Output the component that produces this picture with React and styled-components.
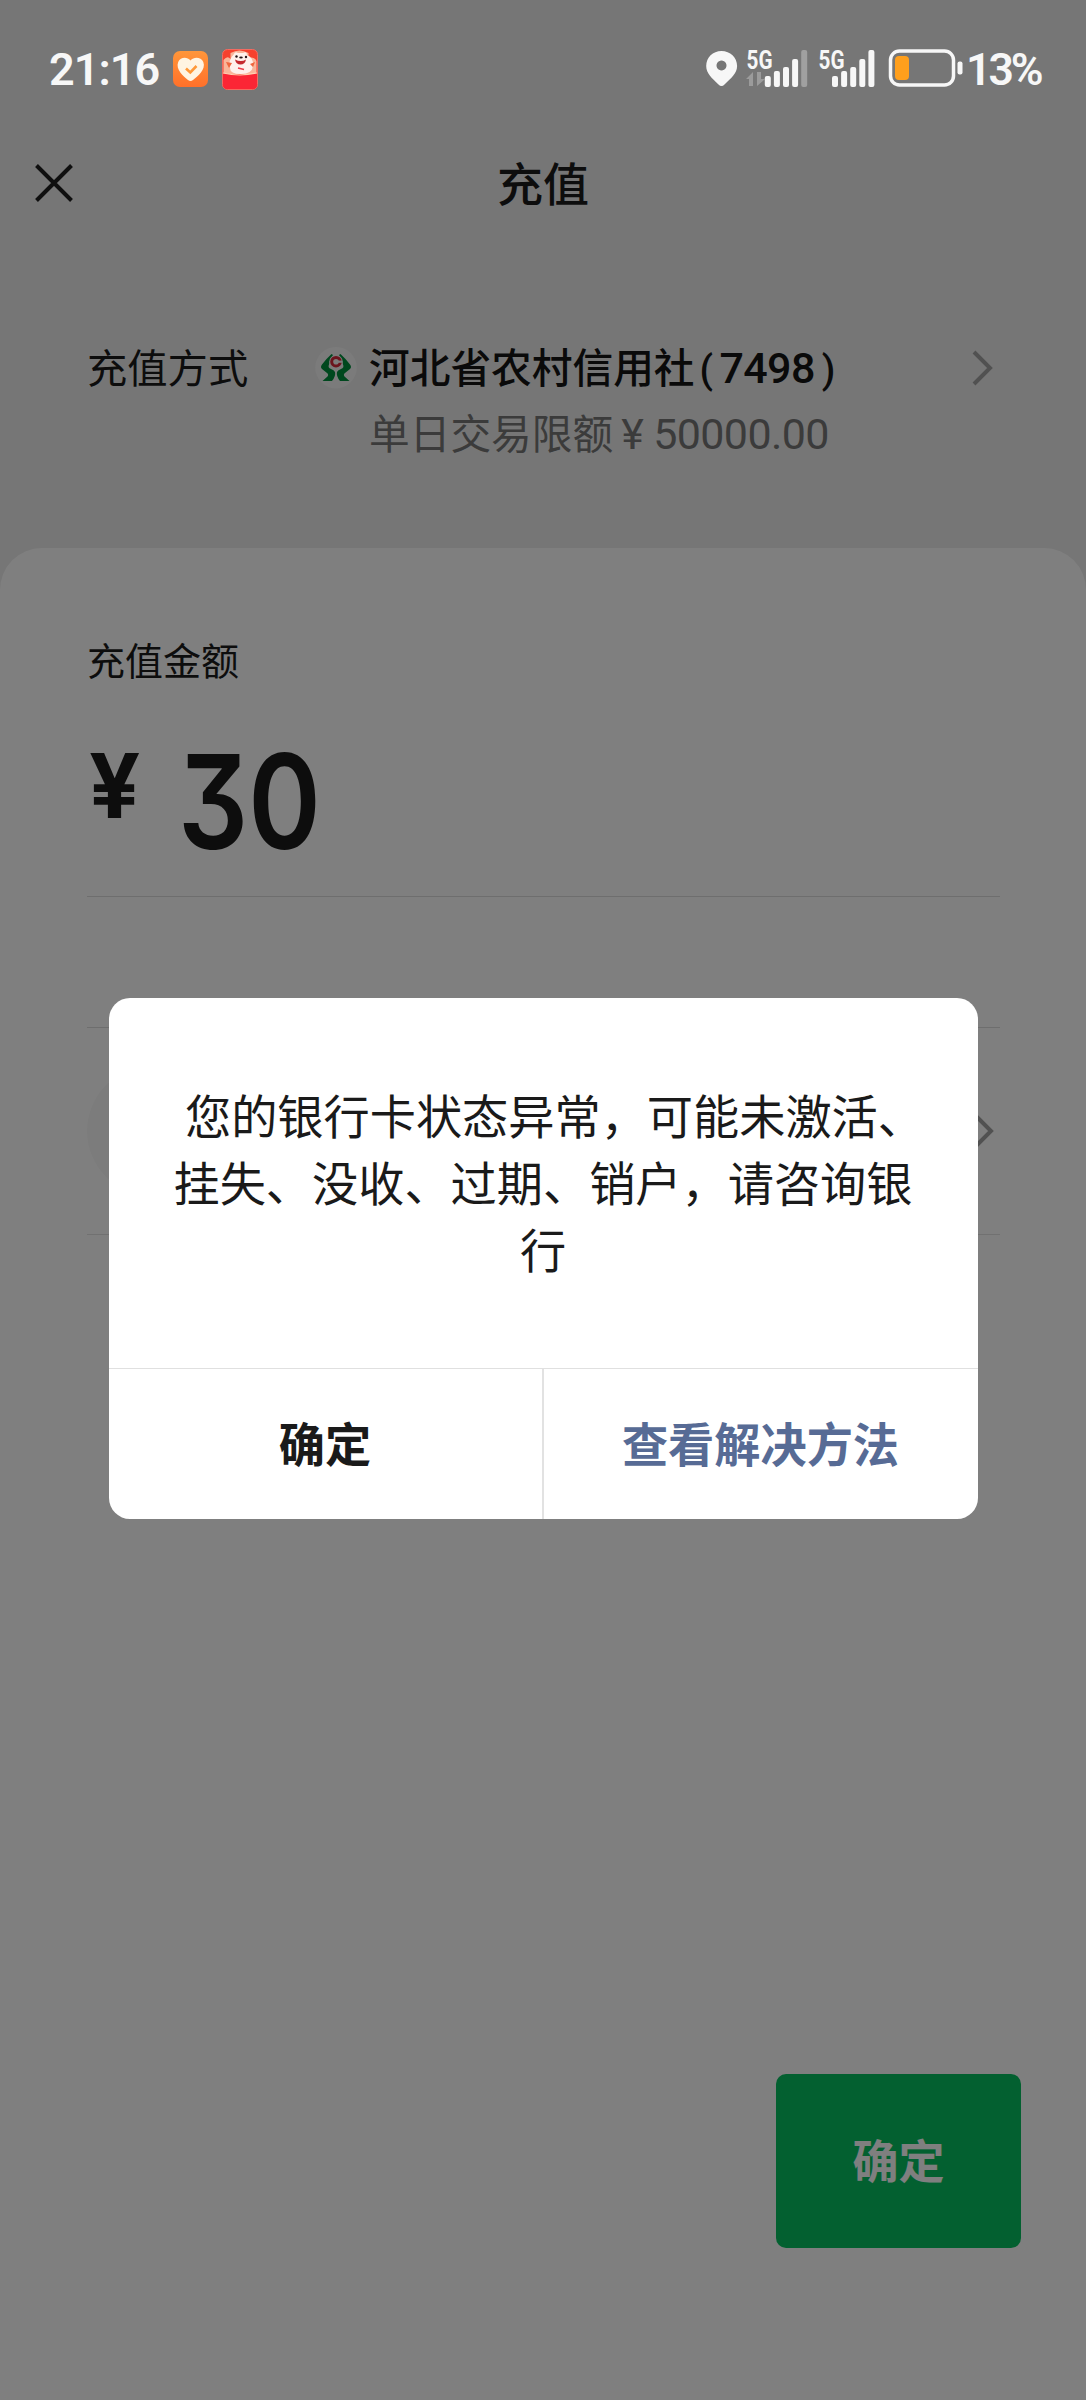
import React from "react";
import styled, { createGlobalStyle } from "styled-components";

const Global = createGlobalStyle`
  *, *::before, *::after { box-sizing: border-box; }
  body { margin: 0; background: #767676; font-family: "Noto Sans CJK SC", sans-serif; }
`;

const Screen = styled.div`
  position: relative;
  width: 1086px;
  height: 2400px;
  display: flex;
  flex-direction: column;
  background: #ededed;
  overflow: hidden;
`;

const StatusBar = styled.header`
  position: relative;
  z-index: 2;
  height: 138px;
  padding: 0 40px 0 49px;
  display: flex;
  align-items: center;
  justify-content: space-between;
  color: #f7f7f7;
  font-family: Roboto, sans-serif;
  font-weight: 600;
`;

const StatusGroup = styled.div`
  display: flex;
  align-items: center;
`;

const StatusText = styled.span`
  padding-top: 2px;
  font-size: 45px;
  line-height: 54px;
  width: ${(p) => p.$width}px;
  letter-spacing: ${(p) => p.$spacing || 0}px;
  white-space: nowrap;
`;

const BatteryText = styled(StatusText)`
  margin-left: -3px;
  font-size: 44.5px;
`;

const NavBar = styled.nav`
  height: 92px;
  padding: 0 30px 3px;
  display: grid;
  grid-template-columns: 48px 1fr 48px;
  align-items: center;
`;

const NavTitle = styled.h1`
  margin: 0;
  padding-bottom: 4px;
  text-align: center;
  font-size: 46px;
  line-height: 64px;
  font-weight: 500;
  color: #1a1a1a;
`;

const MethodRow = styled.section`
  height: 318px;
  padding: 106px 89px 0 87px;
  display: grid;
  grid-template-columns: 228px 54px 1fr 26px;
  align-items: start;
`;

const Label = styled.span`
  font-size: ${(p) => p.$size}px;
  line-height: 60px;
  color: #1a1a1a;
  white-space: nowrap;
`;

const IconCell = styled.span`
  height: 64px;
  display: flex;
  align-items: center;
`;

const MethodInfo = styled.div`
  display: flex;
  flex-direction: column;
`;

const BankName = styled.strong`
  font-size: 40.7px;
  line-height: 60px;
  font-weight: 500;
  color: #141414;
  white-space: nowrap;
`;

const Digits = styled.span`
  font-family: Roboto, "Noto Sans CJK SC", sans-serif;
  font-size: 43px;
  line-height: 1;
  letter-spacing: -0.6px;
`;

const Bracket = styled.span`
  margin: 0 ${(p) => p.$after || 0}px 0 ${(p) => p.$before || 0}px;
  font-size: 39px;
`;

const Limit = styled.span`
  margin-top: 6px;
  font-size: 40.7px;
  line-height: 60px;
  color: #767676;
  white-space: nowrap;
`;

const LimitSign = styled.span`
  margin: 0 10px 0 8px;
`;

const AmountPanel = styled.main`
  flex: 1;
  display: flex;
  flex-direction: column;
  padding: 81px 65px 152px 87px;
  border-radius: 42px 42px 0 0;
  background: #fff;
`;

const AmountLine = styled.div`
  width: 913px;
  height: 208px;
  padding: 53px 0 0 2px;
  display: flex;
  align-items: flex-start;
  border-bottom: 1px solid #dcdcdc;
  color: #1a1a1a;
  font-family: Inter, sans-serif;
  font-weight: 700;
`;

const Currency = styled.span`
  width: 89px;
  font-size: 90px;
  line-height: 88px;
`;

const Amount = styled.span`
  font-size: 131px;
  line-height: 119px;
  font-weight: 600;
  font-feature-settings: "cv09" 1;
  transform: scaleX(0.84);
  transform-origin: left;
`;

const Gap = styled.div`
  width: 913px;
  height: 131px;
  border-bottom: 1px solid #dcdcdc;
`;

const OptionRow = styled.div`
  width: 913px;
  height: 207px;
  padding-right: 6px;
  display: flex;
  align-items: center;
  justify-content: space-between;
  border-bottom: 1px solid #e2e2e2;
`;

const OptionPill = styled.span`
  width: 260px;
  height: 130px;
  border-radius: 65px;
  background: #f9f9f9;
`;

const OptionArrow = styled.span`
  display: flex;
`;

const SubmitButton = styled.button`
  margin-top: auto;
  align-self: flex-end;
  width: 245px;
  height: 174px;
  padding: 0 0 6px;
  border: 0;
  border-radius: 10px;
  background: #07c160;
  color: #fff;
  font: 700 46px/64px "Noto Sans CJK SC", sans-serif;
`;

const Overlay = styled.div`
  position: absolute;
  inset: 0;
  z-index: 1;
  display: flex;
  align-items: flex-start;
  justify-content: center;
  padding-top: 998px;
  background: rgba(0, 0, 0, 0.5);
`;

const Dialog = styled.div`
  width: 869px;
  height: 521px;
  display: flex;
  flex-direction: column;
  border-radius: 21px;
  background: #fff;
  overflow: hidden;
`;

const Message = styled.p`
  flex: 1;
  margin: 0;
  padding-top: 82px;
  font-size: 46.2px;
  line-height: 67px;
  text-align: center;
  color: #1a1a1a;
  white-space: pre;
`;

const Lead = styled.span`
  padding-left: 23px;
`;

const Actions = styled.div`
  height: 151px;
  display: grid;
  grid-template-columns: 433px 1fr;
  border-top: 1px solid #e0e0e0;
`;

const Action = styled.button`
  padding: 0 0 4px;
  border: 0;
  border-left: ${(p) => (p.$divided ? "2px solid #e2e2e2" : "0")};
  background: transparent;
  color: ${(p) => p.$color};
  font: 700 46.2px/64px "Noto Sans CJK SC", sans-serif;
`;

const Bars = ({ x, lastColor = "#f7f7f7" }) =>
  [77, 72, 68, 60, 51].map((top, i) => (
    <rect key={top} x={x + i * 9.1} y={top - 49} width="6" height={88 - top} rx="2"
      fill={i === 4 ? lastColor : "#f7f7f7"} />
  ));

const Network = ({ x }) => (
  <text x={x} y="21" textLength="26" lengthAdjust="spacingAndGlyphs" fill="#f7f7f7"
    fontFamily="Roboto, sans-serif" fontWeight="700" fontSize="25">5G</text>
);

const StatusIcons = () => (
  <svg width="264" height="58" viewBox="706 -8 264 58">
    <path fillRule="evenodd" fill="#f7f7f7" d="M722.500 3c-8.700 0-15.300 6.500-15.300 15 0 7.500 6 12.200 12.300 18.600q3 3 6 0c6.300-6.400 12.600-11.100 12.600-18.600 0-8.500-6.900-15-15.600-15zM722.500 12.500a5 5 0 1 0 .01 0z" />
    <Network x={747.500} />
    <path d="M747 31l7-7v14h-4v-7zM758 24h4v7h4l-8 7z" fill="#9b9b9b" />
    <Bars x={765.800} lastColor="#a0a0a0" />
    <Network x={819.500} />
    <Bars x={833} />
    <rect x="891.500" y="3" width="63" height="34" rx="9" fill="none" stroke="#f7f7f7" strokeWidth="3.500" />
    <rect x="896" y="8" width="14" height="24" rx="4" fill="#ff9f1c" />
    <rect x="958.500" y="13.500" width="5" height="13" rx="2" fill="#f7f7f7" />
  </svg>
);

const HealthIcon = () => (
  <svg width="35" height="36" viewBox="0 0 35 36">
    <defs>
      <linearGradient id="orange" x1="0" y1="0" x2="0" y2="1">
        <stop offset="0" stopColor="#ff963a" />
        <stop offset="1" stopColor="#ff702a" />
      </linearGradient>
    </defs>
    <rect width="35" height="36" rx="7" fill="url(#orange)" />
    <path d="M17.500 9.500C14 5.500 7.500 6 5.200 11c-3 7.500 5.500 14.500 9.800 18q2.500 2 5 0C24.500 25.500 33.300 18.500 30.300 11 28 6 21 5.500 17.500 9.500z" fill="#fff4e2" />
    <path d="M13 17.500l4.300 4 6.200-6.500" fill="none" stroke="#ff9838" strokeWidth="2.600" />
  </svg>
);

const MascotIcon = () => (
  <svg width="36" height="41" viewBox="0 0 36 41">
    <rect x=".5" y=".5" width="35" height="40" rx="5" fill="#f6402d" stroke="#f36b61" />
    <path d="M1.500 11q4-5 7-1V4q9-5 18 0v5q6-2 8 3v13h-33z" fill="#f9b59a" />
    <path d="M12 5q1-3 4-1h5q4-2 4 2 7 3 6 11-1 8-12 8T8 19q-2-8 4-14z" fill="#fff1ec" />
    <circle cx="14.500" cy="7.500" r="1.200" fill="#261719" /><circle cx="24" cy="8" r="1.200" fill="#261719" />
    <ellipse cx="19" cy="8.500" rx="1.800" ry="1" fill="#261719" />
    <path d="M13 10.500q6 3 11 0-1 5-5.500 5T13 10.500z" fill="#c5282d" />
    <path d="M16 19l6 1.500" stroke="#ee3c48" strokeWidth="1.500" />
    <path d="M4 13l6 1-3 5zM28 15l5-2-2 5z" fill="#f0663e" />
    <path d="M1 24q17 4 34 0v11.500q0 4.500-4.500 4.500h-25Q1 40 1 35.500z" fill="#fb2635" />
    <path d="M1 24q17 4 34 0" fill="none" stroke="#ffd1b0" strokeWidth="1.200" />
  </svg>
);

const BankLogo = () => (
  <svg width="42" height="42" viewBox="0 0 42 42">
    <circle cx="21" cy="20.700" r="20.700" fill="#f7f7f7" />
    <g fill="#00903d">
      <path d="M16.500 7Q11 12 7 17.500 5 20 7 22l5 4q2 1.500.5 3.500L7.500 34H17q4-5 3-9-1-2-4-3-3.500-1.500-2-4.500.7-5 4-9.500z" />
      <path d="M25.500 7Q31 12 35 17.500q2 2.500 0 4.500l-5 4q-2 1.500-.5 3.500L34.500 34H25q-4-5-3-9 1-2 4-3 3.500-1.500 2-4.500-.7-5-4-9.500z" />
    </g>
    <circle cx="21" cy="14.700" r="6.800" fill="#f7f7f7" />
    <circle cx="21" cy="14.700" r="4.300" fill="none" stroke="#d6293a" strokeWidth="3" />
    <path d="M20 14.700h7" stroke="#f7f7f7" strokeWidth="2.200" />
  </svg>
);

const Chevron = () => (
  <svg width="22" height="38" viewBox="0 0 22 38">
    <path d="M3 3l16 16L3 35" fill="none" stroke="#a3a3a3" strokeWidth="4" />
  </svg>
);

const CloseIcon = () => (
  <svg width="48" height="48" viewBox="0 0 48 48">
    <path d="M6.500 6.500l35 35M41.500 6.500l-35 35" stroke="#1f1f1f" strokeWidth="4" />
  </svg>
);

const Spacer = styled.span`
  width: ${(p) => p.$width}px;
`;

export default function App() {
  return (
    <>
      <Global />
      <Screen>
        <StatusBar>
          <StatusGroup>
            <StatusText $width={124} $spacing={-1}>21:16</StatusText>
            <HealthIcon />
            <Spacer $width={14} />
            <MascotIcon />
          </StatusGroup>
          <StatusGroup>
            <StatusIcons />
            <BatteryText $width={80} $spacing={-3}>13%</BatteryText>
          </StatusGroup>
        </StatusBar>
        <NavBar>
          <CloseIcon />
          <NavTitle>充值</NavTitle>
        </NavBar>
        <MethodRow>
          <Label $size={40.3}>充值方式</Label>
          <IconCell><BankLogo /></IconCell>
          <MethodInfo>
            <BankName>
              河北省农村信用社
              <Digits><Bracket $before={5} $after={7}>(</Bracket>7498<Bracket $before={7}>)</Bracket></Digits>
            </BankName>
            <Limit>单日交易限额<Digits><LimitSign>¥</LimitSign>50000.00</Digits></Limit>
          </MethodInfo>
          <IconCell><Chevron /></IconCell>
        </MethodRow>
        <AmountPanel>
          <Label $size={38}>充值金额</Label>
          <AmountLine>
            <Currency>¥</Currency>
            <Amount>30</Amount>
          </AmountLine>
          <Gap />
          <OptionRow>
            <OptionPill />
            <OptionArrow><Chevron /></OptionArrow>
          </OptionRow>
          <SubmitButton>确定</SubmitButton>
        </AmountPanel>
        <Overlay>
          <Dialog>
            <Message><Lead>您的银行卡状态异常，可能未激活、</Lead>{"\n挂失、没收、过期、销户，请咨询银\n行"}</Message>
            <Actions>
              <Action $color="#1a1a1a">确定</Action>
              <Action $color="#576b95" $divided>查看解决方法</Action>
            </Actions>
          </Dialog>
        </Overlay>
      </Screen>
    </>
  );
}
